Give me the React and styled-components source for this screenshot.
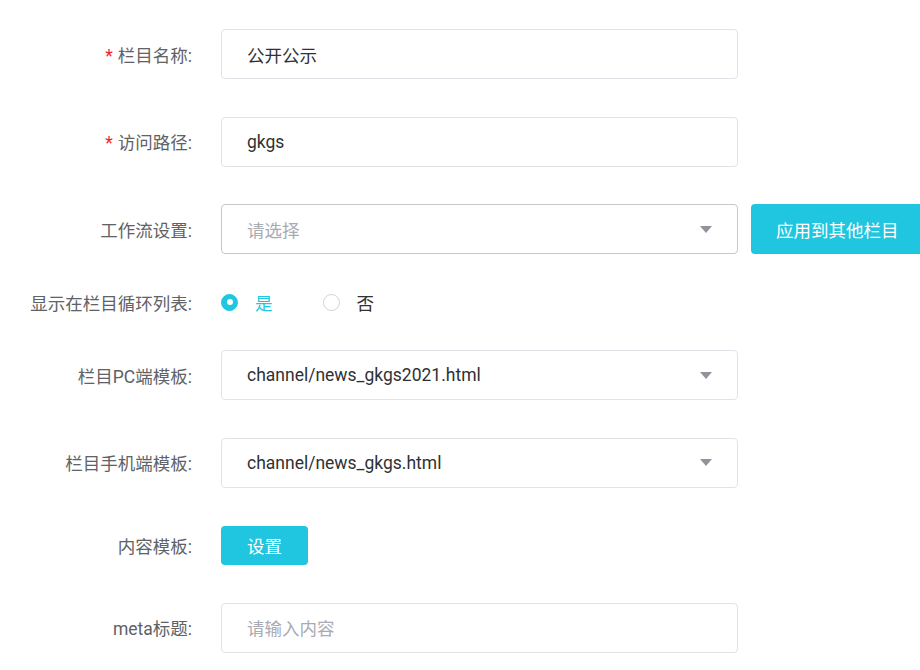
import React from "react";
import styled, { createGlobalStyle } from "styled-components";

const Global = createGlobalStyle`
  html, body { margin: 0; padding: 0; background: #fff; }
  body { font-family: Roboto, "Noto Sans CJK SC", sans-serif; overflow: hidden; }
`;

const TEAL = "#20c6df";

const Form = styled.div`
  display: flex;
  flex-direction: column;
  gap: 37.5px;
  padding-top: 29px;
  width: 920px;
`;

const Row = styled.div`
  display: flex;
  align-items: center;
  height: ${(p) => p.h || 50}px;
`;

const Label = styled.label`
  flex: 0 0 192px;
  text-align: right;
  font-size: 17.5px;
  color: #606266;
  margin-right: 29px;
  white-space: nowrap;
`;

const Star = styled.span`
  color: #f5222d;
  margin-right: 5px;
`;

const Field = styled.div`
  box-sizing: border-box;
  width: 517px;
  height: 50px;
  flex: 0 0 517px;
  border: 1px solid ${(p) => (p.dark ? "#c6c8cc" : "#e1e3e8")};
  border-radius: 4px;
  display: flex;
  align-items: center;
  padding: 0 25px 0 25px;
  font-size: 17.5px;
  color: ${(p) => (p.placeholder ? "#a8abb2" : "#303133")};
  justify-content: space-between;
`;

const Arrow = styled.span`
  width: 0;
  height: 0;
  border-left: 6px solid transparent;
  border-right: 6px solid transparent;
  border-top: 7px solid #909399;
`;

const Button = styled.button`
  box-sizing: border-box;
  height: ${(p) => p.h}px;
  padding: 0 ${(p) => p.px || 25}px;
  border: none;
  border-radius: 4px;
  background: ${TEAL};
  color: #fff;
  font-family: Roboto, "Noto Sans CJK SC", sans-serif;
  font-size: 17.5px;
  white-space: nowrap;
  flex: 0 0 auto;
  margin-left: ${(p) => p.ml || 0}px;
  cursor: pointer;
`;

const RadioGroup = styled.div`
  display: flex;
  align-items: center;
  gap: 50px;
`;

const RadioItem = styled.div`
  display: flex;
  align-items: center;
  gap: 17px;
  font-size: 17.5px;
  color: ${(p) => (p.checked ? TEAL : "#303133")};
`;

const Circle = styled.span`
  box-sizing: border-box;
  width: 17px;
  height: 17px;
  border-radius: 50%;
  border: 1px solid ${(p) => (p.checked ? TEAL : "#cfd2d8")};
  background: ${(p) => (p.checked ? TEAL : "#fff")};
  display: flex;
  align-items: center;
  justify-content: center;
  &::after {
    content: "";
    width: 6px;
    height: 6px;
    border-radius: 50%;
    background: #fff;
    display: ${(p) => (p.checked ? "block" : "none")};
  }
`;

export default function App() {
  return (
    <>
      <Global />
      <Form>
        <Row>
          <Label><Star>*</Star>栏目名称:</Label>
          <Field>公开公示</Field>
        </Row>
        <Row>
          <Label><Star>*</Star>访问路径:</Label>
          <Field>gkgs</Field>
        </Row>
        <Row>
          <Label>工作流设置:</Label>
          <Field dark placeholder="1">请选择<Arrow /></Field>
          <Button h={50} ml={13}>应用到其他栏目</Button>
        </Row>
        <Row h={21}>
          <Label>显示在栏目循环列表:</Label>
          <RadioGroup>
            <RadioItem checked><Circle checked />是</RadioItem>
            <RadioItem><Circle />否</RadioItem>
          </RadioGroup>
        </Row>
        <Row>
          <Label>栏目PC端模板:</Label>
          <Field>channel/news_gkgs2021.html<Arrow /></Field>
        </Row>
        <Row>
          <Label>栏目手机端模板:</Label>
          <Field>channel/news_gkgs.html<Arrow /></Field>
        </Row>
        <Row h={40}>
          <Label>内容模板:</Label>
          <Button h={39} px={26}>设置</Button>
        </Row>
        <Row>
          <Label>meta标题:</Label>
          <Field placeholder="1">请输入内容</Field>
        </Row>
      </Form>
    </>
  );
}
